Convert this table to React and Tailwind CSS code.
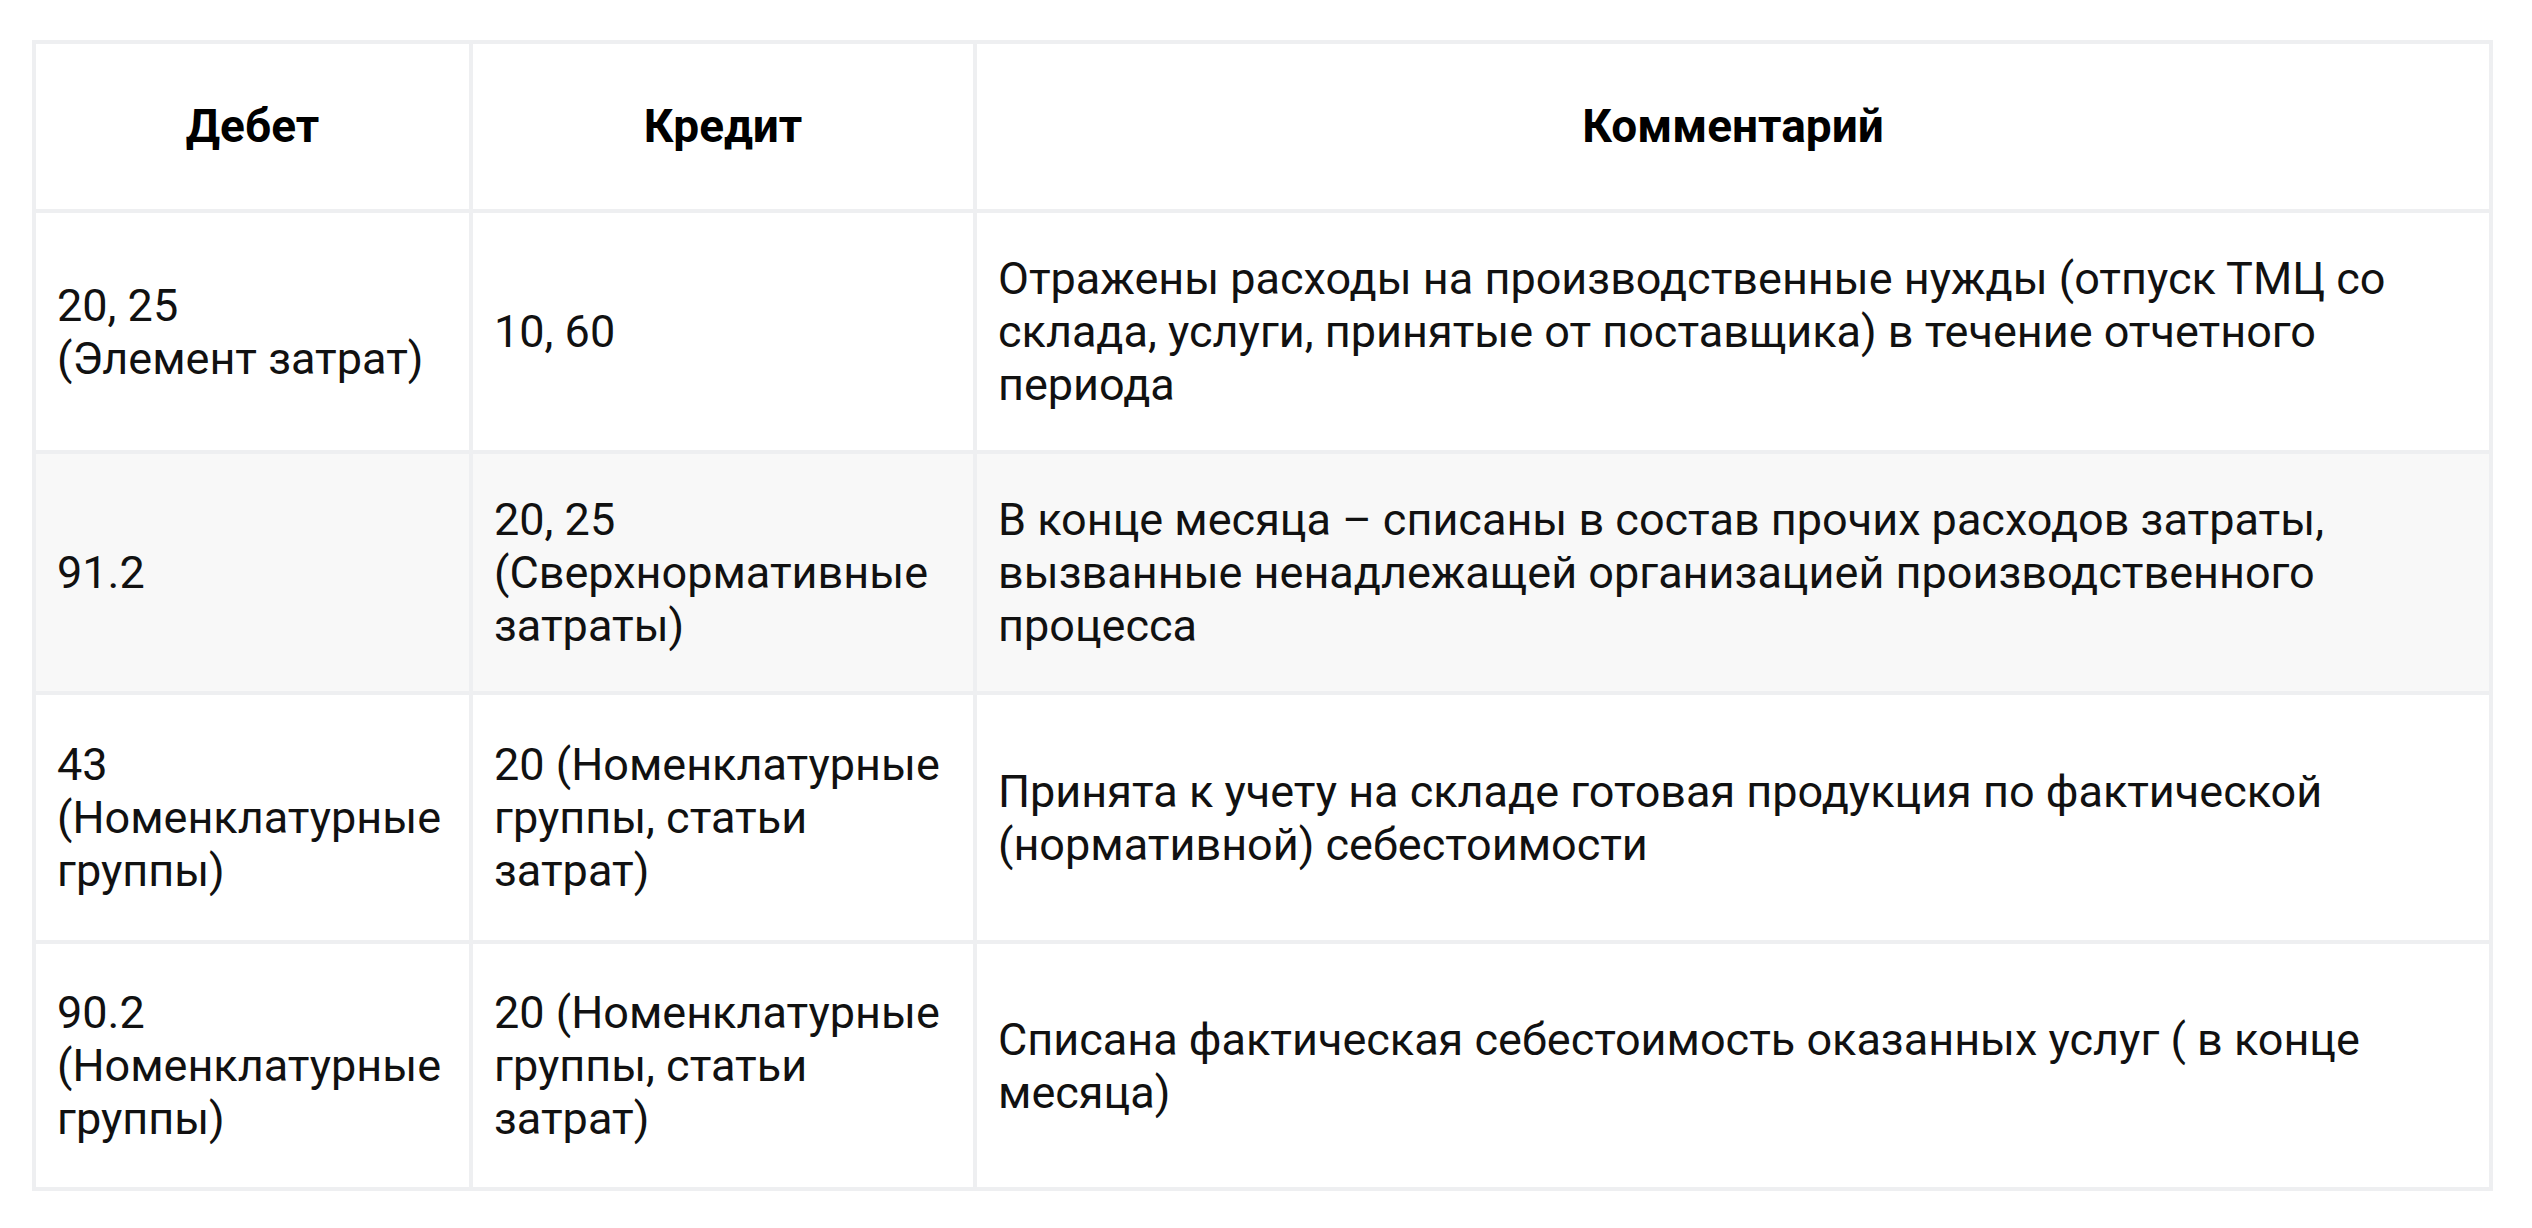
const rows = [
  {
    debit: '20, 25\n(Элемент затрат)',
    credit: '10, 60',
    comment: 'Отражены расходы на производственные нужды (отпуск ТМЦ со склада, услуги, принятые от поставщика) в течение отчетного периода',
    pad: 'py-[39px]',
  },
  {
    debit: '91.2',
    credit: '20, 25\n(Сверхнормативные затраты)',
    comment: 'В конце месяца – списаны в состав прочих расходов затраты, вызванные ненадлежащей организацией производственного процесса',
    pad: 'py-[39px]',
    shaded: true,
  },
  {
    debit: '43 (Номенклатурные группы)',
    credit: '20 (Номенклатурные группы, статьи затрат)',
    comment: 'Принята к учету на складе готовая продукция по фактической (нормативной) себестоимости',
    pad: 'py-[43px]',
  },
  {
    debit: '90.2 (Номенклатурные группы)',
    credit: '20 (Номенклатурные группы, статьи затрат)',
    comment: 'Списана фактическая себестоимость оказанных услуг ( в конце месяца)',
    pad: 'py-[42px]',
  },
]

const cell = 'border-4 border-[#eeeff1] px-[21px] align-middle text-left font-normal whitespace-pre-line'
const head = 'border-4 border-[#eeeff1] px-[21px] py-[56px] align-middle text-center text-[46px] font-bold text-black'

export default function App() {
  return (
    <div className="min-h-screen bg-white pl-[32px] pt-[40px]" style={{ fontFamily: 'Roboto, "Noto Sans", sans-serif' }}>
      <table className="w-[2461px] table-fixed border-collapse text-[45px] leading-[53px] text-[#111]">
        <colgroup>
          <col className="w-[437px]" />
          <col className="w-[504px]" />
          <col />
        </colgroup>
        <thead>
          <tr>
            <th className={head}>Дебет</th>
            <th className={head}>Кредит</th>
            <th className={head}>Комментарий</th>
          </tr>
        </thead>
        <tbody>
          {rows.map((r, i) => (
            <tr key={i} className={r.shaded ? 'bg-[#f8f8f8]' : 'bg-white'}>
              <td className={`${cell} ${r.pad}`}>{r.debit}</td>
              <td className={`${cell} ${r.pad}`}>{r.credit}</td>
              <td className={`${cell} ${r.pad}`}>{r.comment}</td>
            </tr>
          ))}
        </tbody>
      </table>
    </div>
  )
}
